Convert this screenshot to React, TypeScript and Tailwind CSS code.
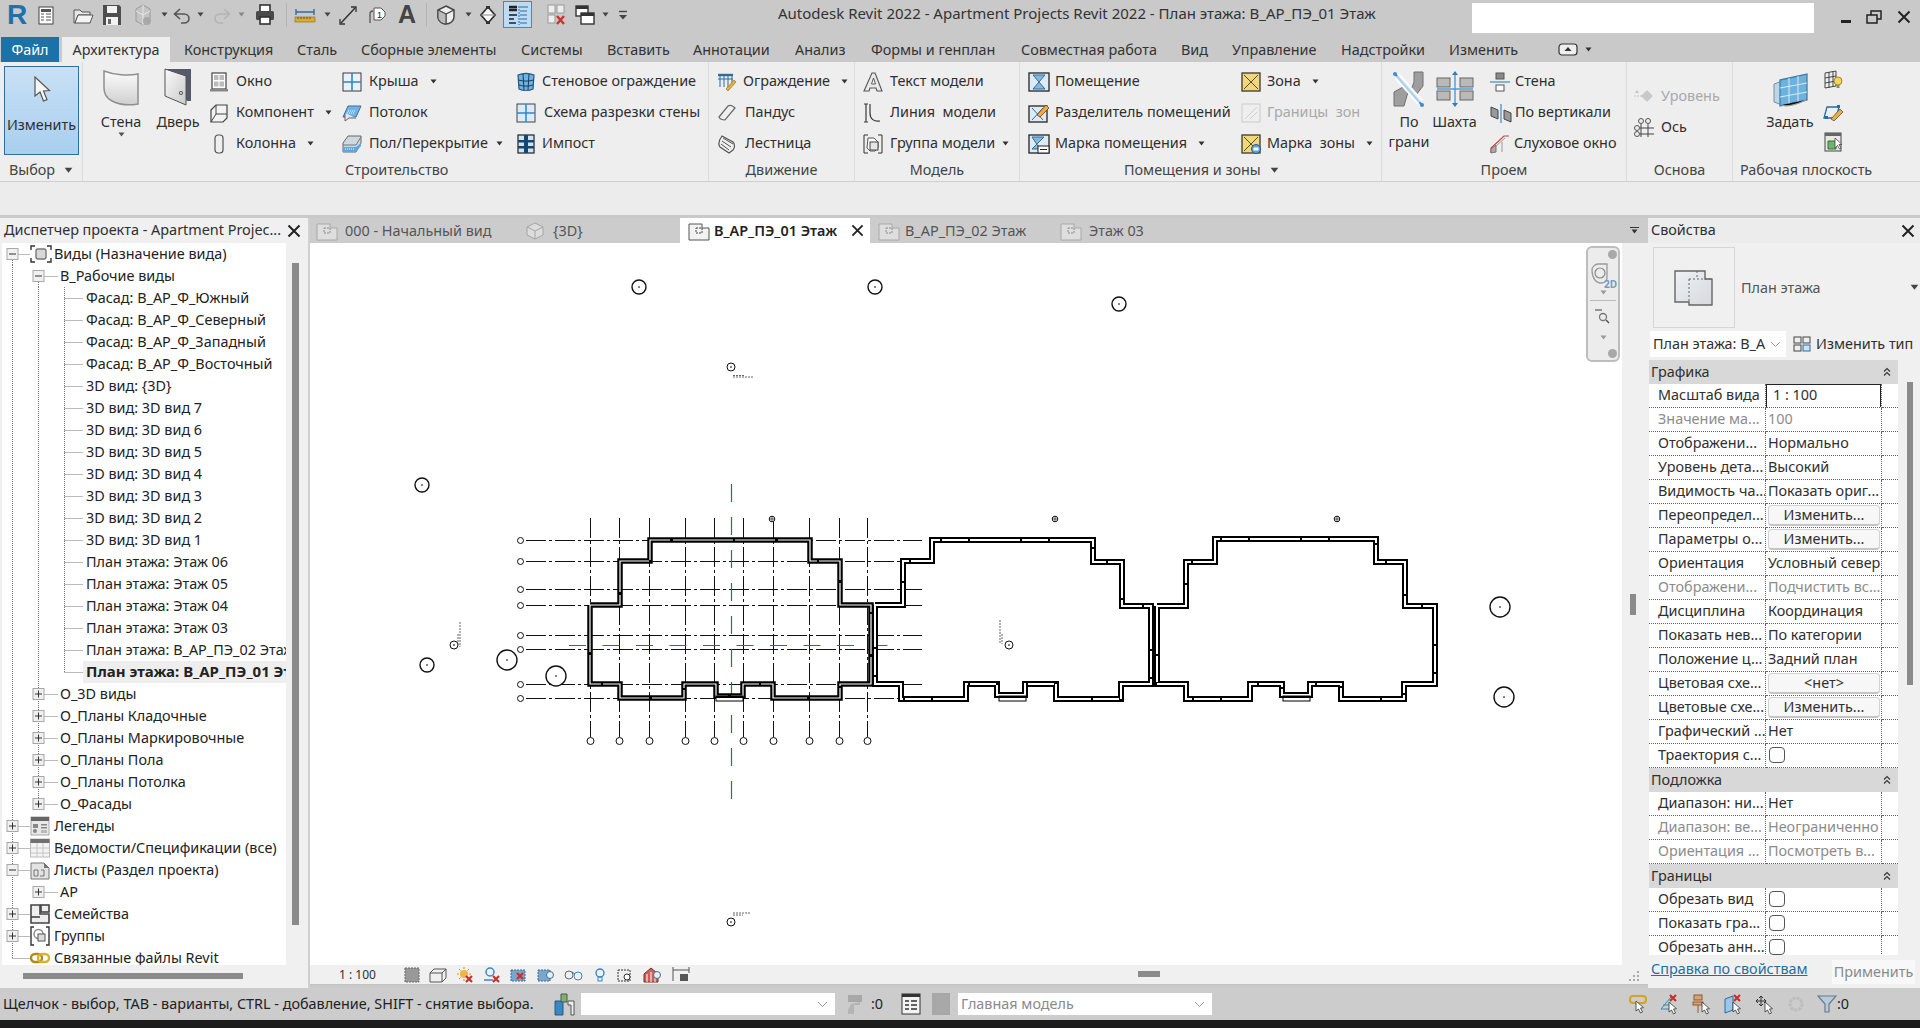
import React from "react";

const S = ({ w = 20, h = 20, vb, children }: { w?: number; h?: number; vb?: string; children?: React.ReactNode }) => (
  <svg width={w} height={h} viewBox={vb ?? `0 0 ${w} ${h}`} className="block shrink-0" fill="none">{children}</svg>
);

const Caret = ({ ml = 11, c = "#333", s = 7 }: { ml?: number; c?: string; s?: number }) => (
  <svg width={s} height={(s * 5) / 7} viewBox="0 0 7 5" className="block shrink-0" style={{ marginLeft: ml }}><path d="M0.5 0.5h6L3.5 4.5z" fill={c} /></svg>
);

/* ---------- quick access icons ---------- */
const QProps = () => <S><rect x="3" y="2" width="14" height="17" fill="#fff" stroke="#444" /><rect x="5" y="4" width="10" height="3" fill="#555" /><path d="M5 9h3M10 9h5M5 12h3M10 12h5M5 15h3M10 15h5" stroke="#555" /></S>;
const QOpen = () => <S w={22}><path d="M2 5h6l2 2h8v3H6l-3 8H2z" fill="#e8e8e8" stroke="#555" /><path d="M6 10h15l-3 8H3z" fill="#f4f4f4" stroke="#555" /></S>;
const QSave = () => <S w={22} h={24}><path d="M2 2h16l2 2v18H2z" fill="#4d4d4d" /><rect x="6" y="3" width="10" height="7" fill="#f2f2f2" /><rect x="5" y="14" width="12" height="8" fill="#f2f2f2" /><rect x="7" y="16" width="3" height="5" fill="#666" /></S>;
const QSync = () => <S h={24}><path d="M10 2l7 4v12l-7 4-7-4V6z" fill="#c4c4c4" stroke="#9a9a9a" /><path d="M10 2v10l7-4M10 12l-7-4M10 12v10" stroke="#e8e8e8" /><circle cx="14" cy="18" r="4" fill="#a8a8a8" /></S>;
const QUndo = () => <S><path d="M8 4L2.5 9 8 14M3 9h9c3 0 5 2 5 4.5S15 18 12 18H9" stroke="#555" strokeWidth="1.6" /></S>;
const QRedo = () => <S><path d="M12 4l5.5 5-5.5 5M17 9H8c-3 0-5 2-5 4.5S5 18 8 18h3" stroke="#b4b4b4" strokeWidth="1.6" /></S>;
const QPrint = () => <S w={22} h={24}><rect x="6" y="2" width="10" height="7" fill="#fff" stroke="#333" strokeWidth="1.6" /><rect x="2" y="8" width="18" height="9" rx="1.5" fill="#4a4a4a" /><rect x="6" y="14" width="10" height="7" fill="#fff" stroke="#333" strokeWidth="1.6" /></S>;
const QDim = () => <S w={22}><path d="M2 4v6M20 4v6M2 7h18" stroke="#2c6ea5" strokeWidth="1.4" /><rect x="1" y="12" width="20" height="5" fill="#e0a92c" stroke="#8a6a18" strokeWidth=".6" /><path d="M4 12v2M7 12v2M10 12v2M13 12v2M16 12v2" stroke="#6a5010" /></S>;
const QAlign = () => <S w={22} h={24}><path d="M4 20L18 5" stroke="#333" strokeWidth="1.5" /><path d="M14 4h5v5M8 21H3v-5" stroke="#333" strokeWidth="1.3" /></S>;
const QTag = () => <S><path d="M3 18V9c0-2 1-3 3-3" stroke="#555" strokeWidth="1.3" /><path d="M7 3h7l4 4v4l-4 4H7z" fill="#fff" stroke="#555" /><text x="10" y="13" fontSize="9" fill="#222" fontFamily="Liberation Sans">1</text></S>;
const Q3D = () => <S w={22} h={24}><path d="M11 3l8 4v7c0 4-4 7-8 7s-8-3-8-7V7z" fill="#eee" stroke="#444" strokeWidth="1.5" /><path d="M3 7l8 4 8-4M11 11v10" stroke="#444" strokeWidth="1.2" /><path d="M3 7l8 4v10c-4 0-8-3-8-7z" fill="#bbb" stroke="#444" /></S>;
const QSection = () => <S><path d="M10 2l7 8-7 8-7-8z" fill="#fff" stroke="#333" strokeWidth="1.8" /><path d="M3 10h14" stroke="#888" /><path d="M8 1h4v3H8zM8 16h4v3H8z" fill="#333" /></S>;
const QThin = () => (
  <div className="w-[29px] h-[27px] bg-[#bddcf3] border border-[#3f8ac0] flex items-center justify-center">
    <S w={22} h={22}><path d="M2 3h8M2 6h8" stroke="#222" strokeWidth="2.4" /><path d="M2 11h8" stroke="#222" strokeWidth="1.6" /><path d="M2 15h5M2 19h7" stroke="#222" strokeWidth="1.6" /><path d="M13 3h8M13 7h7M13 11h7M13 15h7M13 19h7" stroke="#2a6ba0" /><path d="M12 2v19" stroke="#2a6ba0" strokeDasharray="2 1" /></S>
  </div>
);
const QClose = () => <S h={24}><rect x="2" y="2" width="7" height="8" fill="#eee" stroke="#999" /><rect x="11" y="2" width="7" height="8" fill="#eee" stroke="#999" /><rect x="2" y="12" width="7" height="8" fill="#eee" stroke="#999" /><path d="M11 13l7 8M18 13l-7 8" stroke="#d2302a" strokeWidth="2.4" /></S>;
const QSwitch = () => <S w={22} h={24}><rect x="2" y="3" width="12" height="10" fill="#fff" stroke="#333" strokeWidth="1.4" /><rect x="7" y="10" width="13" height="11" fill="#fff" stroke="#333" strokeWidth="1.4" /><rect x="7" y="10" width="13" height="3" fill="#333" /><rect x="2" y="3" width="12" height="3" fill="#333" /></S>;
const QCustom = () => <svg width="10" height="10" viewBox="0 0 10 10" className="block"><path d="M1 1.5h8" stroke="#444" strokeWidth="1.4" /><path d="M1 5h8L5 9.5z" fill="#444" /></svg>;

/* ---------- ribbon icons ---------- */
const Cursor = () => <svg width="18" height="27" viewBox="0 0 18 27" className="block"><path d="M2 1v19l5-4 3.5 9 3.5-1.4L10.500 15l6-.5z" fill="#f6f6f6" stroke="#555" strokeWidth="1.2" /></svg>;
const Wall = () => (
  <svg width="38" height="38" viewBox="0 0 38 38" className="block"><defs><linearGradient id="wallg" x1="0" y1="0" x2="0" y2="1"><stop offset="0" stopColor="#fcfcfc" /><stop offset="1" stopColor="#cfcfcf" /></linearGradient></defs>
    <path d="M2 2c10 4 24 5 34 3v30c-11 2-20 0-26-3-6-3-8-8-8-13z" fill="url(#wallg)" stroke="#8f8f8f" strokeWidth="1.5" /></svg>
);
const Door = () => (
  <svg width="28" height="38" viewBox="0 0 28 38" className="block"><defs><linearGradient id="doorg" x1="0" y1="0" x2="1" y2="1"><stop offset="0" stopColor="#fafafa" /><stop offset="1" stopColor="#c9c9c9" /></linearGradient></defs>
    <path d="M1 1h26v32h-4z" fill="#55596a" /><path d="M1 1l21 7v29L1 28z" fill="url(#doorg)" stroke="#555" /><circle cx="17" cy="25" r="1.6" stroke="#555" fill="#ddd" /></svg>
);
const Win = () => <S><rect x="3" y="1" width="14" height="16" fill="#fff" stroke="#444" strokeWidth="1.2" /><rect x="5" y="3" width="4.500" height="5" fill="#bbb" /><rect x="10.500" y="3" width="4.500" height="5" fill="#bbb" /><rect x="5" y="9.500" width="4.500" height="5" fill="#bbb" /><rect x="10.500" y="9.500" width="4.500" height="5" fill="#bbb" /><rect x="1" y="17" width="18" height="2.500" fill="#888" /></S>;
const Comp = () => <S><path d="M2 7l5-5h11v13l-4 4H2z" fill="#f3f3f3" stroke="#444" strokeWidth="1.2" /><path d="M7 2v9h11M7 11l-5 8" stroke="#444" /></S>;
const Col = () => <S><rect x="6" y="1" width="8" height="18" rx="3" fill="#efefef" stroke="#555" strokeWidth="1.2" /></S>;
const Roof = () => <S><rect x="1" y="1" width="18" height="18" fill="#e9f2fa" stroke="#3b3b3b" /><path d="M10 1v18M1 10h18" stroke="#2e86c9" strokeWidth="1.6" /></S>;
const Ceil = () => <S><path d="M6 3h13l-5 11H1z" fill="#6fb3e8" stroke="#3b6e99" /><path d="M3 10v8l4-3h7" stroke="#666" fill="#e6e6e6" /><path d="M6 8h8M5 10h7" stroke="#fff" strokeDasharray="1 1" /></S>;
const Floor = () => <S><path d="M6 2h13v7L14 18H1V9z" fill="#cfd8df" stroke="#666" /><path d="M1 11h13l5-8" stroke="#777" /><path d="M1 13h13l5-4v3l-5 6H1z" fill="#5ca8e4" /><path d="M3 15h9" stroke="#fff" strokeDasharray="1 1" /></S>;
const Curtain = () => <S><path d="M2 3c5-2 11-2 16 0l-1 14c-4 2-10 2-14 0z" fill="#6fb2e4" stroke="#25567f" strokeWidth="1.2" /><path d="M7 2l1 16M13 2l-1 16M2.500 8c5 1.500 10 1.500 15 0M3 13c5 1.500 9 1.500 14 0" stroke="#133c5f" /></S>;
const Grid2 = () => <S><rect x="1" y="1" width="18" height="18" fill="#dcebf7" stroke="#444" /><path d="M10 1v18M1 10h18" stroke="#2e86c9" strokeWidth="1.5" /></S>;
const Mull = () => <S><rect x="2" y="1" width="16" height="18" fill="#cfe5f6" stroke="#222" strokeWidth="1.2" /><rect x="8" y="1" width="4" height="18" fill="#14466e" /><rect x="2" y="6" width="16" height="2.500" fill="#14466e" /><rect x="2" y="12" width="16" height="2.500" fill="#14466e" /></S>;
const Rail = () => <S><path d="M1 3h15" stroke="#2d6c9e" strokeWidth="2.4" /><path d="M3 3v12M7 3v12M11 3v12M15 3v10M1 7h15" stroke="#2d6c9e" /><path d="M9 17l8-9 2 2-8 9z" fill="#e9b13c" stroke="#8a6516" strokeWidth=".6" /></S>;
const Ramp = () => <S><path d="M2 14L11 3c2-1 5 0 7 2l-10 12c-3 0-5-1-6-3z" fill="#efefef" stroke="#666" strokeWidth="1.2" /></S>;
const Stair = () => <S><path d="M5 2l11 6c2 2 2 6 0 8l-4 3-9-6c-2-3-1-7 2-11z" fill="#efefef" stroke="#555" strokeWidth="1.2" /><path d="M5 7l9 6M6 4l10 6M4 10l8 6" stroke="#555" /></S>;
const MText = () => <S><path d="M9 1h3l7 18h-5l-1-3H7l-1 3H1z" fill="#eaeaea" stroke="#555" strokeWidth="1.1" /><path d="M8.500 12h4l-2-6z" fill="#fff" stroke="#555" /></S>;
const MLine = () => <S><path d="M3 1v18M7 1v9c0 6 4 9 10 8" stroke="#3a3a3a" strokeWidth="1.2" /><path d="M1 1h4M1 19h4" stroke="#3a3a3a" /></S>;
const MGroup = () => <S><path d="M5 1H1v18h4M15 1h4v18h-4" stroke="#333" /><path d="M5 4h6l4 4v6l-3 3H7l-3-3z" fill="#fff" stroke="#555" /><rect x="7" y="8" width="8" height="8" fill="#e6e6e6" stroke="#444" /></S>;
const Room = () => <S w={22}><rect x="1" y="1" width="20" height="18" fill="#dcebf6" stroke="#333" strokeWidth="1.4" /><path d="M5 3h12L5 17h12z" fill="#8ab7d8" stroke="#2f6d9a" /></S>;
const RoomSep = () => <S w={22}><rect x="1" y="3" width="18" height="16" fill="#dcebf6" stroke="#333" strokeWidth="1.4" /><path d="M4 5l11 12M4 17L15 5" stroke="#2f6d9a" /><path d="M9 12l9-10 3 3-9 9z" fill="#e9b13c" stroke="#8a3020" strokeWidth=".8" /></S>;
const RoomTag = () => <S w={22}><rect x="1" y="1" width="20" height="18" fill="#dcebf6" stroke="#333" strokeWidth="1.4" /><path d="M4 3h12L4 15h8z" fill="#8ab7d8" stroke="#2f6d9a" /><rect x="10" y="12" width="11" height="7" fill="#fff" stroke="#222" /><path d="M12 15.500h7" stroke="#222" /></S>;
const Zone = () => <S><rect x="1" y="1" width="18" height="18" fill="#f0d77d" stroke="#3a3a2a" strokeWidth="1.3" /><path d="M3 3l14 14M17 3L3 17" stroke="#5a4f20" /></S>;
const ZoneB = () => <S><rect x="1" y="1" width="18" height="18" fill="#eeeeee" stroke="#c9c9c9" /><path d="M4 16L16 4M9 16l7-7" stroke="#d0d0d0" /></S>;
const ZoneT = () => <S><rect x="1" y="1" width="18" height="18" fill="#f0d77d" stroke="#3a3a2a" strokeWidth="1.3" /><path d="M3 3l14 14M17 3L3 17" stroke="#5a4f20" /><circle cx="15" cy="15" r="4.500" fill="#5c9fd4" stroke="#2a5d85" /><rect x="12.500" y="13.500" width="5" height="3" fill="#fff" /></S>;
const ByFace = () => (
  <svg width="34" height="38" viewBox="0 0 34 38" className="block">
    <path d="M22 2h9v14l-7 9-5-5 3-8zM2 22l9-5 5 5-4 14H2z" fill="#9e9e9e" stroke="#707070" />
    <path d="M5 6l23 26" stroke="#fff" strokeWidth="7" /><path d="M3 4l27 31" stroke="#3d8fd1" strokeWidth="2" />
    <circle cx="3" cy="4" r="2" fill="#3d8fd1" /><circle cx="30" cy="35" r="2" fill="#3d8fd1" /><path d="M5 6l23 26" stroke="#dcecf8" strokeWidth="4" opacity=".7" />
  </svg>
);
const Shaft = () => (
  <svg width="38" height="38" viewBox="0 0 38 38" className="block">
    <rect x="1" y="8" width="13" height="9" fill="#b9b9b9" stroke="#666" /><rect x="24" y="8" width="13" height="9" fill="#b9b9b9" stroke="#666" />
    <rect x="1" y="21" width="13" height="9" fill="#b9b9b9" stroke="#666" /><rect x="24" y="21" width="13" height="9" fill="#b9b9b9" stroke="#666" />
    <path d="M19 2v34M1 19h36" stroke="#4e9ad6" strokeWidth="1.4" /><path d="M16 5l3-4 3 4zM16 33l3 4 3-4z" fill="#2e7fc0" />
  </svg>
);
const OWall = () => <S><rect x="6" y="1" width="8" height="6" fill="#888" stroke="#555" /><rect x="6" y="13" width="8" height="6" fill="#fff" stroke="#555" /><path d="M0 10h20" stroke="#4e9ad6" strokeWidth="1.4" /></S>;
const OVert = () => <S w={22}><path d="M1 4l7 3v9L1 13zM14 7l7 3v9l-7-3z" fill="#999" stroke="#444" /><path d="M11 1v19" stroke="#4e9ad6" strokeWidth="1.4" /></S>;
const ODormer = () => <S><path d="M1 19V14L14 2h5" stroke="#c9423a" strokeWidth="1.2" /><path d="M1 19l5-1V11L1 15z" fill="#aaa" stroke="#777" /><path d="M6 12L15 4M12 18V8" stroke="#999" /></S>;
const Level = () => <S><path d="M0 9h8" stroke="#c4c4c4" strokeDasharray="2 1" /><path d="M3 3l2 3h-4z" fill="#c4c4c4" /><path d="M13 3l6 6-6 6-6-6z" fill="#c9c9c9" /></S>;
const Axis = () => <S><circle cx="7" cy="3" r="2.500" stroke="#555" /><circle cx="14" cy="3" r="2.500" stroke="#555" /><circle cx="3" cy="10" r="2.500" stroke="#555" /><circle cx="3" cy="16" r="2.500" stroke="#555" /><path d="M7 6v13M14 6v13M6 10h14M6 16h14" stroke="#444" /></S>;
const SetPlane = () => (
  <svg width="36" height="36" viewBox="0 0 36 36" className="block">
    <path d="M2 12l8-3v24l-8-3z" fill="#bcd6e8" stroke="#7f8e99" /><path d="M8 8l27-6v26L8 34z" fill="#6fb1dd" stroke="#3e7ea8" strokeWidth="1.3" />
    <path d="M17 6v26M26 4v26M8 16l27-5M8 25l27-5" stroke="#d7ebf8" /><path d="M10 33c4 2 14 0 24-5" stroke="#999" strokeWidth="1.3" />
  </svg>
);
const PShow = () => <S><path d="M2 3l11-2v15L2 18z" fill="#eee" stroke="#444" /><path d="M6 2v16M10 1.500v15M2 8l11-2M2 13l11-2" stroke="#444" /><circle cx="15" cy="11" r="4" fill="#f2d468" stroke="#a68820" /><rect x="13.500" y="15" width="3" height="3" fill="#888" /></S>;
const PRef = () => <S><path d="M4 6h12l-3 11H1z" stroke="#2a6ba0" strokeWidth="1.3" /><rect x="2" y="15" width="3" height="3" fill="#2a6ba0" /><rect x="14" y="4" width="3" height="3" fill="#2a6ba0" /><path d="M8 18l9-10 3 3-9 9z" fill="#e9b13c" stroke="#444" strokeWidth=".7" /></S>;
const PView = () => <S><rect x="2" y="1" width="16" height="18" fill="#e8e8e8" stroke="#444" /><rect x="2" y="1" width="16" height="3" fill="#666" /><path d="M5 9h8v8H5z" fill="#6fb36f" stroke="#2f6f2f" /><path d="M12 6v10l2.500-2.500 2 3.500 1.500-1-2-3.500h3z" fill="#fff" stroke="#333" strokeWidth=".7" /></S>;

/* ---------- tree icons ---------- */
const TViews = () => <S w={22}><path d="M1 6V2h4M17 2h4v4M1 14v4h4M21 14v4h-4" stroke="#333" strokeWidth="1.4" /><rect x="6" y="5" width="10" height="10" rx="2" fill="#d8d8d8" stroke="#777" strokeWidth="1.4" /></S>;
const TLegend = () => <S><rect x="1" y="1" width="18" height="18" fill="#e8e8e8" stroke="#aaa" /><rect x="1" y="1" width="18" height="4" fill="#666" /><rect x="3" y="8" width="5" height="4" fill="#888" /><rect x="11" y="8" width="6" height="1.500" fill="#888" /><rect x="11" y="11" width="6" height="1.500" fill="#888" /><circle cx="5" cy="15" r="2" fill="#888" /><rect x="11" y="14" width="6" height="3" fill="#bbb" /></S>;
const TSched = () => <S><rect x="0.500" y="1" width="19" height="18" fill="#f3f3f3" stroke="#bbb" /><rect x="0.500" y="1" width="19" height="4" fill="#707070" /><path d="M7 5v14M13 5v14M1 10h18M1 15h18" stroke="#c5c5c5" /></S>;
const TSheet = () => <S><path d="M1 3h13l5 5v11H1z" fill="#e3e3e3" stroke="#777" /><path d="M14 3l5 5h-5z" fill="#777" /><path d="M4 16v-6h4v6zM10 16h4v-6h-3" stroke="#777" /></S>;
const TFam = () => <S><path d="M1 1h9v9h9v9H1z" fill="#eee" stroke="#444" strokeWidth="1.6" /><rect x="11" y="1" width="8" height="7" fill="#eee" stroke="#444" strokeWidth="1.6" /><path d="M1 13h9" stroke="#444" strokeWidth="1.6" /></S>;
const TGroup = () => <S><path d="M4 1H1v18h3M16 1h3v18h-3" stroke="#333" strokeWidth="1.4" /><circle cx="8.500" cy="8" r="4.500" stroke="#888" strokeWidth="1.4" /><rect x="8" y="8" width="7" height="7" fill="#ddd" stroke="#555" /></S>;
const TLink = () => <S><rect x="1" y="6" width="11" height="8" rx="4" stroke="#b08a1c" strokeWidth="2.400" /><rect x="8" y="6" width="11" height="8" rx="4" stroke="#d8b030" strokeWidth="2.400" /></S>;

const TabIcon = () => <S w={22} h={20}><path d="M1 3h13v4h7v12H1z" fill="#dedede" stroke="#a8a8a8" /><path d="M8 7h6v5H8z" stroke="#8c8c8c" strokeDasharray="2 1" /></S>;
const TabIconOn = () => <S w={22} h={20}><path d="M1 3h13v4h7v12H1z" fill="#f2f2f2" stroke="#555" /><path d="M8 7h6v5H8z" stroke="#444" strokeDasharray="2 1" /></S>;
const Tab3D = () => <S w={22} h={20}><path d="M11 2l8 4v8l-8 4-8-4V6z" fill="#ddd" stroke="#a4a4a4" /><path d="M3 6l8 4 8-4M11 10v8" stroke="#a4a4a4" /></S>;

const X = ({ s = 14 }: { s?: number }) => <svg width={s} height={s} viewBox="0 0 14 14" className="block" fill="none"><path d="M1.500 1.500l11 11M12.500 1.500l-11 11" stroke="#222" strokeWidth="2" /></svg>;
const DblUp = () => <svg width="8" height="10" viewBox="0 0 8 10" className="block" fill="none"><path d="M1 4.500l3-3 3 3M1 8.500l3-3 3 3" stroke="#333" strokeWidth="1.100" /></svg>;
const Chev = ({ c = "#9a9a9a" }: { c?: string }) => <svg width="11" height="7" viewBox="0 0 11 7" className="block" fill="none"><path d="M1 1l4.500 4.500L10 1" stroke={c} /></svg>;

/* ---------- ribbon structure ---------- */
type ItemP = { icon: React.ReactNode; text: string; caret?: number; iw?: number; dim?: boolean };
const Item = ({ icon, text, caret, iw = 27, dim }: ItemP) => (
  <div className="h-[31px] flex items-center whitespace-pre">
    <div className="shrink-0" style={{ width: iw }}>{icon}</div>
    <span className={`mb-[2px] ${dim ? "text-[#a9a9a9]" : ""}`}>{text}</span>
    {caret !== undefined && <Caret ml={caret} />}
  </div>
);
const Big = ({ w, icon, lines, caret, pt = 4 }: { w: number; icon: React.ReactNode; lines: string[]; caret?: boolean; pt?: number }) => (
  <div className="flex flex-col items-center shrink-0" style={{ width: w }}>
    <div className="h-[46px]" style={{ paddingTop: pt }}>{icon}</div>
    <div className="flex flex-col items-center leading-[20px] whitespace-nowrap">{lines.map((l) => <span key={l}>{l}</span>)}</div>
    {caret && <Caret ml={0} c="#555" />}
  </div>
);
const Panel = ({ w, label, caret, labelPl, children }: { w: number; label: string; caret?: boolean; labelPl?: number; children: React.ReactNode }) => (
  <div className="shrink-0 h-full flex flex-col border-r border-r-[#dcdcdc]" style={{ width: w }}>
    <div className="h-[98px] flex pt-[4px]">{children}</div>
    <div className="h-[22px] flex items-center justify-center whitespace-nowrap text-[#444]" style={labelPl !== undefined ? { justifyContent: "flex-start", paddingLeft: labelPl } : undefined}>
      {label}{caret && <Caret ml={9} c="#444" s={9} />}
    </div>
  </div>
);

/* ---------- browser tree ---------- */
type Row = { t: string; l: 0 | 1 | 2; e?: "+" | "-"; ic?: React.ReactNode; v1?: boolean; v2?: boolean; last?: boolean; sel?: boolean; end0?: boolean };
const rows: Row[] = [
  { t: "Виды (Назначение вида)", l: 0, e: "-", ic: <TViews />, },
  { t: "В_Рабочие виды", l: 1, e: "-", v1: true },
  ...["Фасад: В_АР_Ф_Южный", "Фасад: В_АР_Ф_Северный", "Фасад: В_АР_Ф_Западный", "Фасад: В_АР_Ф_Восточный", "3D вид: {3D}", "3D вид: 3D вид 7", "3D вид: 3D вид 6", "3D вид: 3D вид 5", "3D вид: 3D вид 4", "3D вид: 3D вид 3", "3D вид: 3D вид 2", "3D вид: 3D вид 1", "План этажа: Этаж 06", "План этажа: Этаж 05", "План этажа: Этаж 04", "План этажа: Этаж 03", "План этажа: В_АР_ПЭ_02 Этаж"].map((t) => ({ t, l: 2 as const, v1: true, v2: true })),
  { t: "План этажа: В_АР_ПЭ_01 Этаж", l: 2, v1: true, sel: true },
  { t: "О_3D виды", l: 1, e: "+", v1: true },
  { t: "О_Планы Кладочные", l: 1, e: "+", v1: true },
  { t: "О_Планы Маркировочные", l: 1, e: "+", v1: true },
  { t: "О_Планы Пола", l: 1, e: "+", v1: true },
  { t: "О_Планы Потолка", l: 1, e: "+", v1: true },
  { t: "О_Фасады", l: 1, e: "+", last: true },
  { t: "Легенды", l: 0, e: "+", ic: <TLegend /> },
  { t: "Ведомости/Спецификации (все)", l: 0, e: "+", ic: <TSched /> },
  { t: "Листы (Раздел проекта)", l: 0, e: "-", ic: <TSheet /> },
  { t: "АР", l: 1, e: "+" },
  { t: "Семейства", l: 0, e: "+", ic: <TFam /> },
  { t: "Группы", l: 0, e: "+", ic: <TGroup /> },
  { t: "Связанные файлы Revit", l: 0, ic: <TLink />, end0: true },
];
const Dot = "#777";
const Box = ({ x, e }: { x: number; e: "+" | "-" }) => (
  <g>
    <rect x={x - 5.500} y="5.500" width="11" height="11" fill="#f0f0f0" stroke="#a8a8a8" />
    <path d={`M${x - 3.500} 11h7`} stroke="#333" />
    {e === "+" && <path d={`M${x} 7.500v7`} stroke="#333" />}
  </g>
);
const Guides = ({ r, i }: { r: Row; i: number }) => {
  const w = r.l === 0 ? 30 : r.l === 1 ? 60 : 83;
  return (
    <svg width={w} height="22" viewBox={`0 0 ${w} 22`} className="block shrink-0" fill="none">
      <g stroke={Dot} strokeDasharray="1 1">
        {!(i === 0) && !r.end0 && <path d="M12.500 0v22" />}
        {i === 0 && <path d="M12.500 11v11" />}
        {r.end0 && <path d="M12.500 0v11" />}
        {r.v1 && <path d={i === 1 ? "M38.500 11v11" : "M38.500 0v22"} />}
        {r.last && <path d="M38.500 0v11" />}
        {r.l === 2 && <path d={r.sel ? "M64.500 0v11" : "M64.500 0v22"} />}
        {r.l === 2 && <path d="M64.500 11.500H83" />}
        {r.l === 1 && <path d="M38.500 11.500H58" />}
        {r.l === 0 && <path d="M12.500 11.500H30" />}
      </g>
      {r.e && <Box x={r.l === 0 ? 12.500 : 38.500} e={r.e} />}
    </svg>
  );
};

/* ---------- properties ---------- */
type P = { a: string; b?: string; dim?: boolean; btn?: boolean; chk?: boolean; edit?: boolean };
const Sect = ({ t }: { t: string }) => (
  <div className="h-[24px] bg-[#d8d8d8] flex items-center justify-between pl-[2px] pr-[7px]"><span className="mb-[1px]">{t}</span><DblUp /></div>
);
const Prop = ({ a, b, dim, btn, chk, edit }: P) => (
  <div className={`h-[24px] flex whitespace-nowrap ${dim ? "text-[#8c8c8c]" : ""}`}>
    <div className="w-[117px] shrink-0 border-b border-dotted border-b-[#666] border-r border-r-[#666] pl-[9px] leading-[22px] bg-white overflow-hidden">{a}</div>
    <div className="w-[116px] shrink-0 border-b border-dotted border-b-[#666] border-r border-r-[#666] bg-white overflow-hidden leading-[22px] pl-[2px]">
      {edit ? <div className="h-[24px] -ml-[2px] border-[1.5px] border-[#222] pl-[6px] leading-[20px]">{b}</div>
        : btn ? <div className="h-[21px] mt-[1px] mr-[1px] rounded-[4px] bg-[#f7f7f7] border border-[#d2d2d2] border-b-[2px] border-b-[#c4c4c4] text-center leading-[17px]">{b}</div>
        : chk ? <div className="w-[16px] h-[16px] mt-[3px] ml-[1px] rounded-[4px] border border-[#555] bg-white" />
        : b}
    </div>
    <div className="w-[16px] shrink-0 border-b border-dotted border-b-[#666] bg-white" />
  </div>
);

/* ---------- drawing ---------- */
const VG = [590, 619, 649, 685, 714, 743, 773, 809, 839, 867];
const HG = [540, 561, 589, 605, 635, 649, 684, 698];
const B1 = "590,605 620,605 620,561 650,561 650,540 810,540 810,561 840,561 840,605 871,605 871,684 840,684 840,698 773,698 773,684 743,684 743,696 716,696 716,684 684,684 684,698 620,698 620,684 590,684 590,605";
const B2 = "875,605 903,605 903,561 932,561 932,540 1093,540 1093,562 1122,562 1122,606 1151,606 1151,684 1121,684 1121,699 1056,699 1056,684 1025,684 1025,695 997,695 997,684 966,684 966,699 901,699 901,684 875,684 875,605";
const B3 = "1157,606 1186,606 1186,562 1215,562 1215,539 1376,539 1376,562 1405,562 1405,606 1435,606 1435,684 1404,684 1404,699 1341,699 1341,684 1310,684 1310,695 1282,695 1282,684 1250,684 1250,699 1186,699 1186,684 1157,684 1157,606";
const circles: [number, number, number][] = [[639, 287, 7], [875, 287, 7], [1119, 304, 7], [422, 485, 7], [427, 665, 7], [507, 660, 10], [556, 676, 10], [1500, 607, 10], [1504, 697, 10], [731, 367, 4], [454, 645, 4], [1009, 645, 4], [731, 922, 4]];
const Plan = () => (
  <svg width="1312" height="722" viewBox="310 243 1312 722" className="block" fill="none">
    <g stroke="#111" strokeWidth="1" strokeDasharray="20 3 3 3">
      {VG.map((x) => <path key={x} d={`M${x + 0.5} 518V737`} />)}
      {HG.map((y) => <path key={y} d={`M526 ${y + 0.5}H922`} />)}
    </g>
    <g stroke="#111" fill="#fff">
      {VG.map((x) => <circle key={x} cx={x + 0.5} cy="741" r="3.500" />)}
      {HG.map((y) => <circle key={y} cx="520.500" cy={y + 0.5} r="3" />)}
    </g>
    <g stroke="#12893a" strokeWidth="1.200">
      <path d="M731.500 484V808" strokeDasharray="18 15" />
      <path d="M569 645.500H895" strokeDasharray="17 16.500" />
    </g>
    <polyline points={B1} stroke="#000" strokeWidth="5.500" strokeLinejoin="miter" />
    <polyline points={B1} stroke="#fff" strokeWidth="1.200" strokeDasharray="40 3 60 2" />
    <polyline points={B2} stroke="#000" strokeWidth="6" strokeLinejoin="miter" />
    <polyline points={B2} stroke="#fff" strokeWidth="2" strokeDasharray="50 2 26 2" />
    <polyline points={B3} stroke="#000" strokeWidth="6" strokeLinejoin="miter" />
    <polyline points={B3} stroke="#fff" strokeWidth="2" strokeDasharray="50 2 26 2" />
    {[[716, 696], [999, 696], [1283, 696]].map(([x, y]) => (
      <g key={x}><rect x={x} y={y} width="27" height="5" fill="#fff" stroke="#000" /><path d={`M${x} ${y + 1}h27`} stroke="#000" strokeWidth="2" /></g>
    ))}
    <g stroke="#111" fill="#fff">
      {circles.map(([x, y, r]) => <circle key={`${x}-${y}`} cx={x} cy={y} r={r} strokeWidth={r > 5 ? 1.4 : 1} />)}
    </g>
    <g fill="#111">{circles.map(([x, y]) => <rect key={`${x}d${y}`} x={x - 1} y={y - 0.5} width="2" height="1" />)}</g>
    {[772, 1055, 1337].map((x) => <g key={x}><circle cx={x} cy="519" r="2.800" fill="#fff" stroke="#111" /><path d={`M${x - 3} 519h6M${x} 516v6`} stroke="#111" strokeWidth=".7" /></g>)}
    <g stroke="#666" strokeDasharray="2 1">
      <path d="M733 377h21M733 375.500h12" />
      <path d="M733 913h17M733 915h10" />
      <path d="M460 622v25M458 634v12" />
      <path d="M1000 620v24M1002 634v10" />
    </g>
  </svg>
);

/* ---------- view bar & status icons ---------- */
const VB = ({ children, ml = 0 }: { children: React.ReactNode; ml?: number }) => <div style={{ marginLeft: ml }} className="shrink-0">{children}</div>;
const RedX = ({ x = 10, y = 10 }: { x?: number; y?: number }) => <path d={`M${x} ${y}l6 6M${x + 6} ${y}l-6 6`} stroke="#c8302a" strokeWidth="2.200" />;
const Pointer = ({ x = 10, y = 9 }: { x?: number; y?: number }) => <path transform={`translate(${x} ${y})`} d="M0 0v10l2.500-2 2 4 2-1-2-4 3-.300z" fill="#fff" stroke="#333" strokeWidth=".8" />;

const tabs = [
  { t: "000 - Начальный вид", w: 204, p: 4, ic: <TabIcon />, iw: 29 },
  { t: "{3D}", w: 164, p: 8, ic: <Tab3D />, iw: 29 },
];
const ribbonTabs: [string, number][] = [["Конструкция", 113], ["Сталь", 64], ["Сборные элементы", 160], ["Системы", 86], ["Вставить", 86], ["Аннотации", 102], ["Анализ", 76], ["Формы и генплан", 150], ["Совместная работа", 160], ["Вид", 51], ["Управление", 109], ["Надстройки", 108], ["Изменить", 109]];

export default function App() {
  return (
    <div className="w-[1920px] h-[1028px] overflow-hidden flex flex-col font-['Noto_Sans',sans-serif] text-[14.4px] text-[#2f2f2f] bg-[#c9c9c9]">
      {/* title bar */}
      <div className="h-[37px] shrink-0 flex items-start relative">
        <div className="flex items-center h-[29px] pl-[7px]">
          <span className="w-[29px] font-['Liberation_Sans',sans-serif] font-bold text-[28px] leading-[32px] text-[#1a73b0]">R</span>
          <VB><QProps /></VB><VB ml={16}><QOpen /></VB><VB ml={7}><QSave /></VB><VB ml={10}><QSync /></VB>
          <Caret ml={8} c="#444" /><VB ml={4}><QUndo /></VB><Caret ml={5} c="#444" /><VB ml={8}><QRedo /></VB><Caret ml={6} c="#888" /><VB ml={9}><QPrint /></VB>
          <div className="w-px h-[24px] bg-[#b5b5b5] ml-[10px]" />
          <VB ml={7}><QDim /></VB><Caret ml={8} c="#444" /><VB ml={6}><QAlign /></VB><VB ml={8}><QTag /></VB>
          <span className="ml-[11px] w-[18px] font-['Liberation_Sans',sans-serif] font-bold text-[25px] leading-[29px] text-[#444]">A</span>
          <div className="w-px h-[24px] bg-[#b5b5b5] ml-[10px]" />
          <VB ml={8}><Q3D /></VB><Caret ml={8} c="#444" /><VB ml={6}><QSection /></VB><VB ml={5}><QThin /></VB>
          <VB ml={14}><QClose /></VB><VB ml={8}><QSwitch /></VB><Caret ml={6} c="#444" /><VB ml={9}><QCustom /></VB>
        </div>
        <div className="absolute left-[778px] top-[3px] whitespace-nowrap text-[15px] leading-[20px] text-[#333]">Autodesk Revit 2022 - Apartment Projects Revit 2022 - План этажа: В_АР_ПЭ_01 Этаж</div>
        <div className="ml-auto flex items-center">
          <div className="w-[342px] h-[30px] mt-[1px] bg-white" />
          <div className="w-[106px] h-[34px] flex items-center justify-between pl-[27px] pr-[9px]">
            <div className="w-[10px] h-[3px] bg-[#222] mt-[8px]" />
            <svg width="16" height="14" viewBox="0 0 16 14" className="block"><path d="M5 1h10v8H5z" fill="none" stroke="#222" strokeWidth="1.500" /><path d="M1 5h10v8H1z" fill="#c9c9c9" stroke="#222" strokeWidth="1.500" /></svg>
            <X />
          </div>
        </div>
      </div>

      {/* ribbon tabs */}
      <div className="h-[25px] shrink-0 flex items-center relative whitespace-nowrap text-[#333]">
        <div className="ml-[1px] w-[58px] h-full bg-[#1c72a8] text-white flex items-center justify-center">Файл</div>
        <div className="ml-[3px] w-[108px] h-full bg-[#eeeeee] flex items-center justify-center">Архитектура</div>
        <div className="w-[14px] shrink-0" />
        {ribbonTabs.map(([t, w]) => (
          <span key={t} className="shrink-0" style={{ width: w }}>{t}</span>
        ))}
        <svg width="20" height="13" viewBox="0 0 20 13" className="block"><rect x="1" y="1" width="18" height="11" rx="3" fill="#eee" stroke="#333" strokeWidth="1.200" /><path d="M10 4l3.500 4h-7z" fill="#333" /></svg>
        <Caret ml={7} c="#333" />
      </div>

      {/* ribbon */}
      <div className="h-[120px] shrink-0 bg-[#eeeeee] flex border-b border-b-[#cfcfcf]">
        <Panel w={83} label="Выбор" caret>
          <div className="ml-[4px] mt-0 w-[75px] h-[89px] bg-[linear-gradient(#c9e0f5,#a8cfee)] border border-[#2f6ea3] flex flex-col items-center">
            <div className="mt-[9px] h-[27px]"><Cursor /></div>
            <div className="mt-[11px]">Изменить</div>
          </div>
        </Panel>
        <Panel w={626} label="Строительство" labelPl={262}>
          <div className="flex pl-[12px]">
            <Big w={52} icon={<Wall />} lines={["Стена"]} caret pt={3} />
            <Big w={62} icon={<Door />} lines={["Дверь"]} pt={2} />
            <div className="w-[133px] shrink-0">
              <Item icon={<Win />} text="Окно" />
              <Item icon={<Comp />} text="Компонент" caret={11} />
              <Item icon={<Col />} text="Колонна" caret={11} />
            </div>
            <div className="w-[174px] shrink-0">
              <Item icon={<Roof />} text="Крыша" caret={11} />
              <Item icon={<Ceil />} text="Потолок" />
              <Item icon={<Floor />} text="Пол/Перекрытие" caret={8} />
            </div>
            <div className="shrink-0">
              <Item icon={<Curtain />} text="Стеновое ограждение" iw={26} />
              <Item icon={<Grid2 />} text="Схема разрезки стены" iw={28} />
              <Item icon={<Mull />} text="Импост" iw={26} />
            </div>
          </div>
        </Panel>
        <Panel w={146} label="Движение">
          <div className="pl-[8px]">
            <Item icon={<Rail />} text="Ограждение" caret={11} iw={26} />
            <Item icon={<Ramp />} text="Пандус" iw={28} />
            <Item icon={<Stair />} text="Лестница" iw={28} />
          </div>
        </Panel>
        <Panel w={165} label="Модель">
          <div className="pl-[8px]">
            <Item icon={<MText />} text="Текст модели" />
            <Item icon={<MLine />} text="Линия  модели" />
            <Item icon={<MGroup />} text="Группа модели" caret={7} />
          </div>
        </Panel>
        <Panel w={362} label="Помещения и зоны" caret labelPl={104}>
          <div className="pl-[8px] flex">
            <div className="w-[213px] shrink-0">
              <Item icon={<Room />} text="Помещение" />
              <Item icon={<RoomSep />} text="Разделитель помещений" />
              <Item icon={<RoomTag />} text="Марка помещения" caret={11} />
            </div>
            <div>
              <Item icon={<Zone />} text="Зона" iw={26} caret={11} />
              <Item icon={<ZoneB />} text="Границы  зон" iw={26} dim />
              <Item icon={<ZoneT />} text="Марка  зоны" iw={26} caret={11} />
            </div>
          </div>
        </Panel>
        <Panel w={245} label="Проем">
          <div className="flex pl-[5px]">
            <Big w={44} icon={<ByFace />} lines={["По", "грани"]} pt={4} />
            <Big w={47} icon={<Shaft />} lines={["Шахта"]} pt={4} />
            <div className="ml-[12px]">
              <Item icon={<OWall />} text="Стена" iw={25} />
              <Item icon={<OVert />} text="По вертикали" iw={25} />
              <Item icon={<ODormer />} text="Слуховое окно" iw={24} />
            </div>
          </div>
        </Panel>
        <Panel w={106} label="Основа">
          <div className="pl-[7px] pt-[15px]">
            <Item icon={<Level />} text="Уровень" dim />
            <Item icon={<Axis />} text="Ось" />
          </div>
        </Panel>
        <div className="flex-1 flex flex-col">
          <div className="h-[98px] flex pt-[4px] pl-[27px]">
            <Big w={60} icon={<SetPlane />} lines={["Задать"]} pt={6} />
            <div className="ml-[3px] pt-[4px] flex flex-col gap-[11px]"><PShow /><PRef /><PView /></div>
          </div>
          <div className="h-[22px] flex items-center pl-[7px] whitespace-nowrap text-[#444]">Рабочая плоскость</div>
        </div>
      </div>

      {/* options bar */}
      <div className="h-[33px] shrink-0 bg-[#ececec]" />

      {/* main */}
      <div className="flex-1 min-h-0 flex pt-[3px]">
        {/* project browser */}
        <div className="w-[310px] shrink-0 h-full flex flex-col bg-[#f0f0f0] border-r-[2px] border-r-[#d0d0d0]">
          <div className="h-[25px] shrink-0 flex items-center justify-between pl-[4px] pr-[7px] whitespace-nowrap"><span className="mb-[2px]">Диспетчер проекта - Apartment Projec...</span><X /></div>
          <div className="flex-1 min-h-0 flex">
            <div className="w-[284px] shrink-0 ml-[2px] h-[722px] bg-white overflow-hidden text-[#222]">
              {rows.map((r, i) => (
                <div key={i} className="h-[22px] -ml-[2px] flex items-center whitespace-nowrap">
                  <Guides r={r} i={i} />
                  {r.l === 0 && <div className="w-[24px] shrink-0">{r.ic}</div>}
                  <div className={r.sel ? "flex-1 min-w-0 h-full bg-[#eeeeee] font-bold text-[15px] pl-[3px] leading-[21px] overflow-hidden" : r.l === 2 ? "min-w-0 pl-[3px] mb-[1px] overflow-hidden" : "mb-[1px]"}>{r.t}</div>
                </div>
              ))}
            </div>
            <div className="pl-[6px] pt-[20px]"><div className="w-[7px] h-[662px] bg-[#8b8b8b]" /></div>
          </div>
          <div className="h-[23px] shrink-0 pl-[23px] pt-[8px]"><div className="w-[220px] h-[6px] bg-[#8b8b8b]" /></div>
        </div>

        {/* center */}
        <div className="flex-1 min-w-0 h-full flex flex-col">
          <div className="h-[25px] shrink-0 flex items-stretch pl-[2px] whitespace-nowrap text-[#555] bg-[#cccccc]">
            {tabs.map((t) => (
              <div key={t.t} className="flex items-center shrink-0" style={{ width: t.w, paddingLeft: t.p }}>
                <div style={{ width: t.iw }}>{t.ic}</div><span>{t.t}</span>
              </div>
            ))}
            <div className="w-[190px] shrink-0 bg-white flex items-center pl-[8px] font-semibold text-[#222]">
              <div className="w-[26px]"><TabIconOn /></div><span>В_АР_ПЭ_01 Этаж</span><div className="ml-auto mr-[6px]"><X s={13} /></div>
            </div>
            <div className="w-[182px] shrink-0 flex items-center pl-[8px]"><div className="w-[27px]"><TabIcon /></div><span>В_АР_ПЭ_02 Этаж</span></div>
            <div className="flex items-center pl-[8px]"><div className="w-[29px]"><TabIcon /></div><span>Этаж 03</span></div>
            <div className="ml-auto mr-[9px] flex items-center gap-px flex-col justify-center"><div className="w-[9px] h-[1px] bg-[#333]" /><Caret ml={0} c="#333" /></div>
          </div>
          <div className="h-[722px] shrink-0 flex bg-[#f0f0f0]">
            <div className="w-[1312px] shrink-0 bg-white relative">
              <Plan />
              <div className="absolute left-[1276px] top-[3px] w-[34px] h-[116px] rounded-[6px] bg-[#ececec] border-2 border-[#bdbdbd] flex flex-col items-center">
                <div className="self-end mr-[1px] mt-[2px] w-[9px] h-[9px] rounded-full bg-[#a8a8a8]" />
                <div className="relative w-[28px] h-[28px] mt-[3px]">
                  <svg width="26" height="26" viewBox="0 0 26 26" className="block" fill="none"><path d="M3 8c0-3 3-6 6-6h9v13c0 4-2 6-6 6-5 0-9-5-9-13z" fill="#ececec" stroke="#9a9a9a" strokeWidth="1.300" /><circle cx="11" cy="11" r="5" stroke="#888" strokeWidth="1.200" /></svg>
                  <span className="absolute right-[0px] bottom-[0px] text-[10px] leading-[12px] font-bold text-[#6f9cc8]">2D</span>
                </div>
                <Caret ml={0} c="#999" />
                <div className="w-[26px] h-px bg-[#bbb] mt-[5px]" />
                <svg width="18" height="18" viewBox="0 0 18 18" className="block mt-[7px]" fill="none"><path d="M1 2h7" stroke="#777" strokeWidth="1.500" /><circle cx="9" cy="9" r="3.500" stroke="#777" strokeWidth="1.300" /><path d="M12 12l3 3" stroke="#555" strokeWidth="1.500" /></svg>
                <div className="mt-[9px]"><Caret ml={0} c="#999" /></div>
                <div className="mt-auto mb-[2px] self-end mr-[1px] w-[9px] h-[9px] rounded-full bg-[#a8a8a8]" />
              </div>
            </div>
            <div className="flex-1 pl-[8px] pt-[351px]"><div className="w-[6px] h-[21px] bg-[#8b8b8b]" /></div>
          </div>
          <div className="h-[20px] shrink-0 bg-[#f0f0f0] border-b border-b-[#c2c2c2] flex items-center text-[12px] whitespace-nowrap relative">
            <span className="ml-[29px] w-[65px]">1 : 100</span>
            <div className="flex items-center gap-[9px]">
              <S w={16} h={16}><rect x="1" y="1" width="14" height="14" fill="#999" stroke="#666" strokeDasharray="2 1" /></S>
              <S w={18} h={16}><path d="M1 6l4-4h12v9l-4 4H1zM1 6h12v9M13 6l4-4" fill="#f0f0f0" stroke="#555" /></S>
              <S w={18} h={18}><circle cx="8" cy="8" r="4" fill="#eeb743" /><path d="M8 1v2M8 13v2M1 8h2M13 8h2M3 3l1.500 1.500M13 3l-1.500 1.500M3 13l1.500-1.500" stroke="#c99325" /><RedX x={10} y={10} /></S>
              <S w={18} h={18}><circle cx="7" cy="6" r="4" stroke="#3b87c4" strokeWidth="1.500" /><path d="M1 14h9" stroke="#3b87c4" strokeWidth="1.500" /><RedX x={10} y={10} /></S>
              <S w={18} h={18}><path d="M1 4h14v11H1z" fill="#7aa7c9" stroke="#3c6f96" strokeDasharray="2 1" /><RedX x={7} y={7} /></S>
              <S w={18} h={18}><path d="M1 4h12v11H1z" fill="#7aa7c9" stroke="#3c6f96" strokeDasharray="2 1" /><circle cx="13" cy="9" r="3.500" fill="#e8f0f6" stroke="#3c6f96" /></S>
              <S w={20} h={16}><circle cx="5" cy="8" r="4" stroke="#666" /><circle cx="14" cy="9" r="4" stroke="#3b87c4" /><path d="M8 5l3 2" stroke="#666" /></S>
              <S w={14} h={16}><circle cx="7" cy="6" r="4" stroke="#3b87c4" strokeWidth="1.400" /><rect x="5" y="10" width="4" height="4" stroke="#3b87c4" /></S>
              <S w={18} h={16}><path d="M2 3h12v11H2z" fill="#eee" stroke="#333" strokeDasharray="2 1" /><circle cx="11" cy="10" r="3" fill="#fff" stroke="#333" /></S>
              <S w={20} h={18}><path d="M1 8l7-6 7 6v8H1z" fill="#c9605a" stroke="#7a2d2a" /><path d="M4 8v8M8 6v10M12 8v8" stroke="#fff" /><circle cx="14" cy="9" r="3.500" fill="#e8f0f6" stroke="#3c6f96" /></S>
              <S w={18} h={18}><path d="M1 1v14M17 1v6M1 4h16" stroke="#555" /><rect x="8" y="8" width="8" height="7" fill="#555" /></S>
            </div>
            <div className="absolute left-[828px] top-[6px] w-[22px] h-[6px] bg-[#8b8b8b]" />
            <svg width="11" height="11" viewBox="0 0 11 11" className="block absolute left-[1319px] top-[6px]"><g fill="#aaa"><rect x="8" y="0" width="2" height="2" /><rect x="4" y="4" width="2" height="2" /><rect x="8" y="4" width="2" height="2" /><rect x="0" y="8" width="2" height="2" /><rect x="4" y="8" width="2" height="2" /><rect x="8" y="8" width="2" height="2" /></g></svg>
          </div>
          <div className="flex-1" />
        </div>

        {/* properties */}
        <div className="w-[272px] shrink-0 h-full bg-[#f0f0f0] flex flex-col relative">
          <div className="h-[25px] shrink-0 flex items-center justify-between pl-[3px] pr-[5px] bg-[#ececec]"><span className="mb-[2px]">Свойства</span><X /></div>
          <div className="h-[85px] shrink-0 pt-[4px] flex items-center">
            <div className="ml-[5px] w-[82px] h-[81px] bg-[#f0f0f0] border border-[#d6d6d6] flex items-center justify-center">
              <svg width="40" height="38" viewBox="0 0 40 38" className="block" fill="none"><defs><linearGradient id="planicon" x1="0" y1="0" x2="1" y2="1"><stop offset="0" stopColor="#eef2f6" /><stop offset="1" stopColor="#d5d8dc" /></linearGradient></defs><path d="M1 2h30v8h7v26H15v-3H1z" fill="url(#planicon)" stroke="#666" strokeWidth="1.400" /><path d="M15 10h23M15 10v23M23 2v8" stroke="#666" strokeDasharray="2 2" /></svg>
            </div>
            <span className="ml-[6px] text-[#555]">План этажа</span>
            <div className="ml-auto mr-[1px]"><Caret ml={0} c="#444" s={9} /></div>
          </div>
          <div className="h-[32px] shrink-0 flex items-center whitespace-nowrap">
            <div className="ml-[2px] w-[136px] h-[26px] bg-white flex items-center justify-between pl-[3px] pr-[5px] overflow-hidden">План этажа: В_А<Chev /></div>
            <svg width="18" height="16" viewBox="0 0 18 16" className="block ml-[7px] shrink-0"><rect x="1" y="1" width="7" height="6" fill="#eee" stroke="#444" /><rect x="10" y="1" width="7" height="6" fill="#eee" stroke="#444" /><rect x="1" y="9" width="7" height="6" fill="#eee" stroke="#444" /><rect x="10" y="9" width="7" height="6" fill="#cfe3f3" stroke="#2a6ba0" /></svg>
            <span className="ml-[5px]">Изменить тип</span>
          </div>
          <div className="flex-1 min-h-0 flex">
            <div className="ml-[1px] w-[249px] shrink-0 h-[595px] overflow-hidden">
              <Sect t="Графика" />
              <Prop a="Масштаб вида" b="1 : 100" edit />
              <Prop a="Значение ма..." b="100" dim />
              <Prop a="Отображени..." b="Нормально" />
              <Prop a="Уровень дета..." b="Высокий" />
              <Prop a="Видимость ча..." b="Показать ориг..." />
              <Prop a="Переопредел..." b="Изменить..." btn />
              <Prop a="Параметры о..." b="Изменить..." btn />
              <Prop a="Ориентация" b="Условный север" />
              <Prop a="Отображени..." b="Подчистить вс..." dim />
              <Prop a="Дисциплина" b="Координация" />
              <Prop a="Показать нев..." b="По категории" />
              <Prop a="Положение ц..." b="Задний план" />
              <Prop a="Цветовая схе..." b="<нет>" btn />
              <Prop a="Цветовые схе..." b="Изменить..." btn />
              <Prop a="Графический ..." b="Нет" />
              <Prop a="Траектория с..." chk />
              <Sect t="Подложка" />
              <Prop a="Диапазон: ни..." b="Нет" />
              <Prop a="Диапазон: ве..." b="Неограниченно" dim />
              <Prop a="Ориентация ..." b="Посмотреть в..." dim />
              <Sect t="Границы" />
              <Prop a="Обрезать вид" chk />
              <Prop a="Показать гра..." chk />
              <Prop a="Обрезать анн..." chk />
            </div>
            <div className="pl-[9px] pt-[22px]"><div className="w-[6px] h-[303px] bg-[#8b8b8b]" /></div>
          </div>
          <div className="h-[32px] shrink-0 flex items-center justify-between pl-[3px] pr-[5px] whitespace-nowrap">
            <span className="underline text-[#1f6f9f] -mt-[7px]">Справка по свойствам</span>
            <div className="w-[83px] h-[24px] bg-[#f8f8f8] text-[#8a8a8a] flex items-center justify-center">Применить</div>
          </div>
        </div>
      </div>

      {/* status bar */}
      <div className="h-[32px] shrink-0 bg-[#cccccc] flex items-center whitespace-nowrap text-[#222]">
        <span className="ml-[3px] w-[550px]">Щелчок - выбор, TAB - варианты, CTRL - добавление, SHIFT - снятие выбора.</span>
        <S w={22} h={24}><path d="M2 9h8v14H2z" fill="#3b87c4" stroke="#225d8a" /><path d="M8 2h6v8H8z" fill="#7fb35e" stroke="#456" /><path d="M15 9h6v14h-3V13h-3z" fill="#eee" stroke="#555" /></S>
        <div className="ml-[6px] w-[254px] h-[22px] bg-white flex items-center justify-end pr-[7px]"><Chev /></div>
        <div className="ml-[10px]"><S w={20} h={24}><path d="M3 3h14v7H3z" fill="#a8a8a8" /><path d="M15 10v3H9v9H3v-4l3-6" fill="#b4b4b4" /></S></div>
        <span className="ml-[6px] w-[30px]">:0</span>
        <S w={20} h={24}><rect x="1" y="2" width="18" height="20" fill="#f3f3f3" stroke="#333" /><rect x="1" y="2" width="18" height="3" fill="#333" /><path d="M4 9h4M10 9h6M4 13h4M10 13h6M4 17h4M10 17h6" stroke="#333" strokeWidth="1.400" /></S>
        <div className="ml-[11px] w-[18px] h-[22px] bg-[#a8a8a8]" />
        <div className="ml-[8px] w-[254px] h-[22px] bg-white flex items-center justify-between pl-[3px] pr-[7px] text-[#8a8a8a]">Главная модель<Chev /></div>
        <div className="ml-[417px] flex items-center gap-[12px]">
          <S w={18} h={22}><rect x="1" y="3" width="16" height="7" rx="3" stroke="#d0a429" strokeWidth="2" /><Pointer x={7} y={8} /></S>
          <S w={20} h={22}><path d="M2 16L12 4M2 16h12M4 12h9" stroke="#3b87c4" /><RedX x={11} y={2} /><Pointer x={10} y={9} /></S>
          <S w={20} h={22}><rect x="3" y="2" width="8" height="5" fill="#e2a06c" stroke="#8a5a30" /><rect x="2" y="9" width="10" height="3" fill="#e2a06c" stroke="#8a5a30" /><path d="M7 12v8" stroke="#8a5a30" /><Pointer x={11} y={9} /></S>
          <S w={20} h={22}><path d="M2 6l8-3v14l-8 3z" fill="#9cc5e6" stroke="#2c6ea5" /><RedX x={11} y={2} /><Pointer x={10} y={9} /></S>
          <S w={20} h={22}><path d="M6 3v10M1 8h10" stroke="#333" /><path d="M4 5l2-2 2 2M4 11l2 2 2-2M3 6L1 8l2 2M9 6l2 2-2 2" stroke="#333" /><Pointer x={10} y={9} /></S>
          <S w={18} h={18}><circle cx="9" cy="9" r="6" stroke="#bdbdbd" strokeWidth="3" strokeDasharray="3 1" /></S>
          <div className="flex items-center"><S w={20} h={20}><path d="M1 2h18l-7 8v8h-4v-8z" fill="#b6cbdc" stroke="#6a7a88" strokeWidth="1.200" /></S><span>:0</span></div>
        </div>
      </div>
      <div className="h-[8px] shrink-0 bg-[#1c1c1c]" />
    </div>
  );
}
